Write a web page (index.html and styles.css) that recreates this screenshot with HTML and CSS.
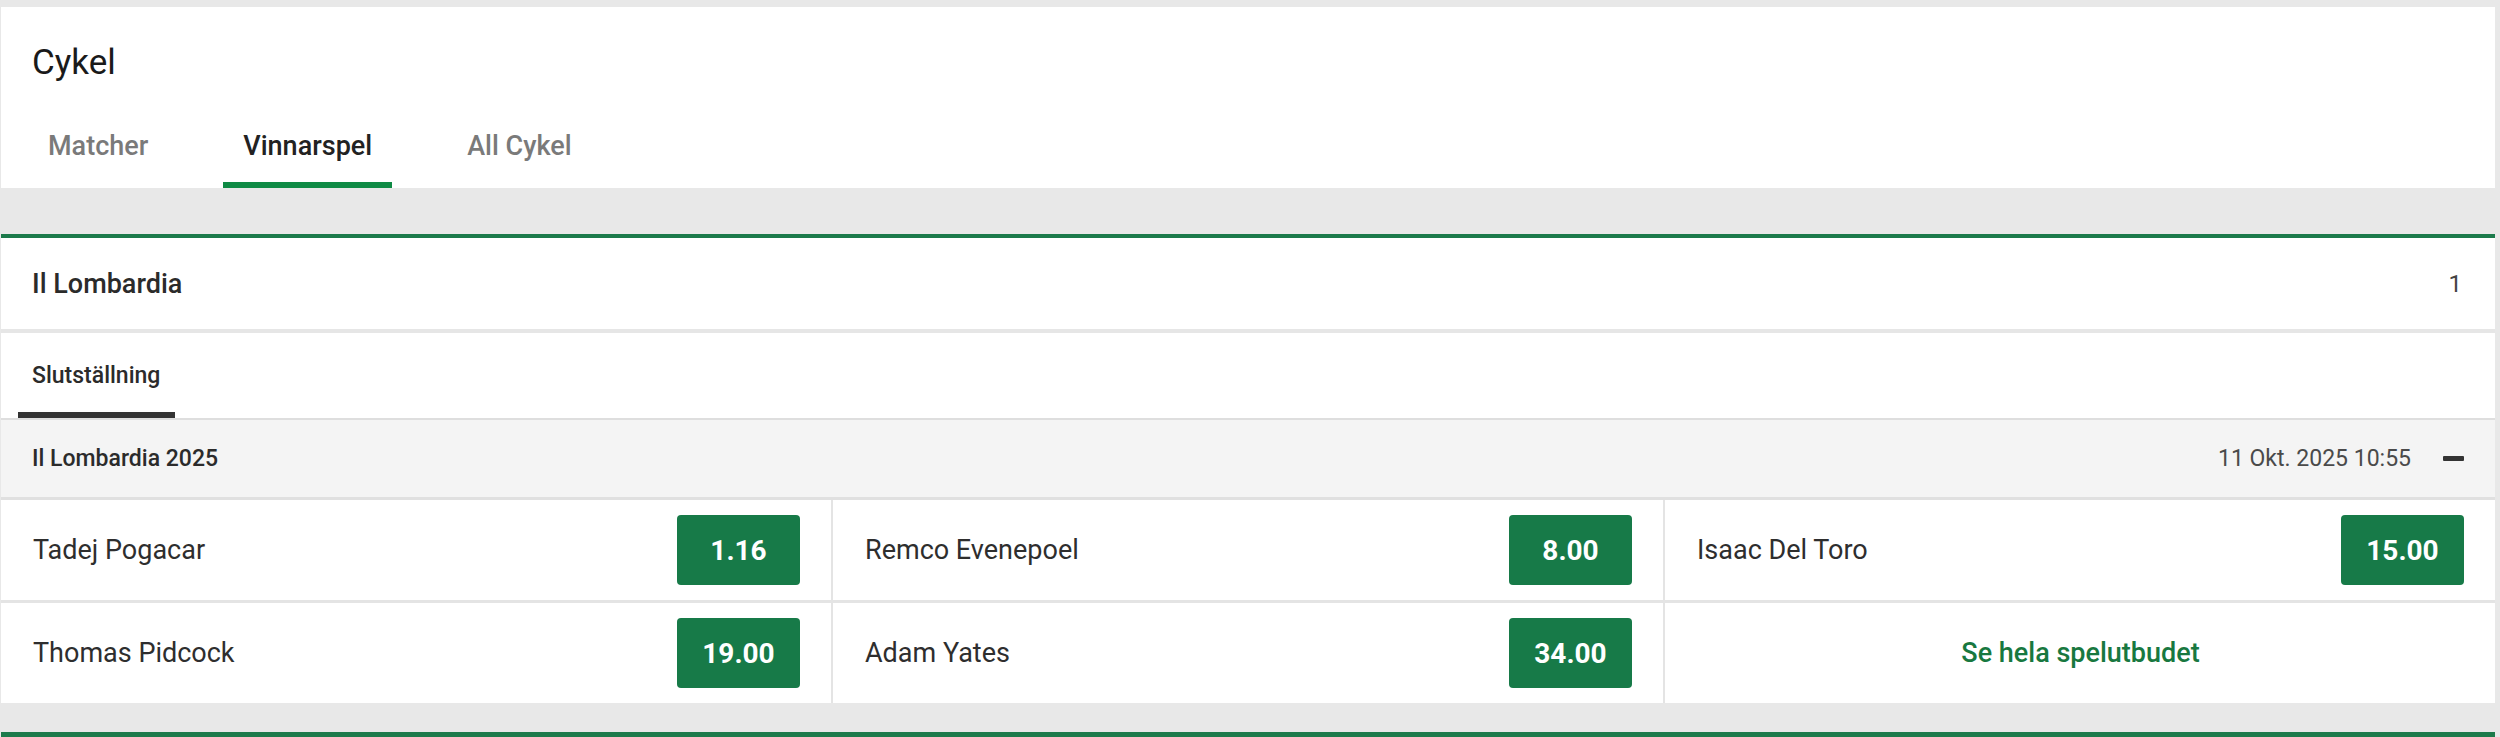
FILE: index.html
```html
<!DOCTYPE html>
<html lang="sv">
<head>
<meta charset="utf-8">
<title>Cykel</title>
<link rel="stylesheet" href="styles.css">
</head>
<body>
<div class="page">
  <div class="top-card">
    <h1 class="title">Cykel</h1>
    <nav class="tabs">
      <a class="tab">Matcher</a>
      <a class="tab active">Vinnarspel</a>
      <a class="tab">All Cykel</a>
    </nav>
  </div>
  <div class="gap-band"></div>
  <section class="event">
    <header class="event-head">
      <span class="event-name">Il Lombardia</span>
      <span class="event-count">1</span>
    </header>
    <div class="subtabs">
      <span class="subtab active">Slutställning</span>
    </div>
    <div class="market-head">
      <span class="market-name">Il Lombardia 2025</span>
      <div class="market-meta">
        <span class="market-date">11 Okt. 2025 10:55</span>
        <span class="collapse" aria-label="Minimera"></span>
      </div>
    </div>
    <div class="grid">
      <div class="cell"><span class="runner">Tadej Pogacar</span><button class="odds">1.16</button></div>
      <div class="cell"><span class="runner">Remco Evenepoel</span><button class="odds">8.00</button></div>
      <div class="cell"><span class="runner">Isaac Del Toro</span><button class="odds">15.00</button></div>
      <div class="cell"><span class="runner">Thomas Pidcock</span><button class="odds">19.00</button></div>
      <div class="cell"><span class="runner">Adam Yates</span><button class="odds">34.00</button></div>
      <div class="cell cell-link"><a class="see-all">Se hela spelutbudet</a></div>
    </div>
  </section>
  <div class="bottom-band"></div>
  <div class="next-section"></div>
</div>
</body>
</html>
```

FILE: styles.css
```css
html, body {
  margin: 0;
  padding: 0;
}
body {
  background: #e8e8e8;
  font-family: Roboto, "Liberation Sans", sans-serif;
  color: #333;
  height: 737px;
  overflow: hidden;
}
.page {
  padding: 7px 5px 0 1px;
}
.top-card {
  background: #fff;
  height: 181px;
  box-sizing: border-box;
  padding-top: 35px;
}
.title {
  margin: 0;
  padding-left: 31px;
  font-size: 35px;
  line-height: 42px;
  font-weight: 400;
  color: #1a1a1a;
}
.tabs {
  display: flex;
  gap: 55px;
  margin-top: 46px;
  padding-left: 27px;
}
.tab {
  display: block;
  padding: 0 20px 20px;
  font-size: 27px;
  line-height: 32px;
  font-weight: 500;
  color: #7a7a7a;
  border-bottom: 6px solid transparent;
}
.tab.active {
  color: #222;
  border-bottom-color: #0f8a44;
}
.gap-band {
  height: 46px;
}
.event {
  background: #fff;
  border-top: 4px solid #1c7a4b;
}
.event-head {
  height: 91px;
  box-sizing: border-box;
  display: flex;
  align-items: center;
  justify-content: space-between;
  padding: 0 33px 0 31px;
  border-bottom: 4px solid #e6e6e6;
  height: 95px;
}
.event-name {
  font-size: 27px;
  font-weight: 500;
  color: #2b2b2b;
}
.event-count {
  font-size: 24px;
  color: #444;
}
.subtabs {
  display: flex;
  padding-left: 17px;
  height: 85px;
}
.subtab {
  display: flex;
  align-items: center;
  box-sizing: border-box;
  height: 85px;
  padding: 6px 15px 0 14px;
  font-size: 23px;
  font-weight: 500;
  color: #2b2b2b;
  border-bottom: 6px solid #333;
}
.market-head {
  display: flex;
  align-items: center;
  justify-content: space-between;
  height: 77px;
  background: #f4f4f4;
  border-top: 2px solid #dedede;
  border-bottom: 3px solid #e0e0e0;
  padding: 0 31px 0 31px;
}
.market-name {
  font-size: 23px;
  font-weight: 500;
  color: #2b2b2b;
}
.market-meta {
  display: flex;
  align-items: center;
  gap: 32px;
}
.market-date {
  font-size: 23px;
  color: #4a4a4a;
}
.collapse {
  display: block;
  width: 21px;
  height: 5px;
  background: #333;
  border-radius: 1px;
}
.grid {
  display: grid;
  grid-template-columns: repeat(3, 1fr);
  gap: 3px 2px;
  background: #e4e4e4;
}
.cell {
  background: #fff;
  height: 100px;
  display: flex;
  align-items: center;
  justify-content: space-between;
  padding: 0 31px 0 32px;
}
.runner {
  font-size: 27px;
  color: #2e2e2e;
}
.odds {
  width: 123px;
  height: 70px;
  border: 0;
  border-radius: 4px;
  background: #177a48;
  color: #fff;
  font-family: Roboto, "Liberation Sans", sans-serif;
  font-size: 28px;
  font-weight: 700;
  padding: 0;
}
.cell-link {
  justify-content: center;
}
.see-all {
  font-size: 27px;
  font-weight: 500;
  color: #187840;
}
.bottom-band {
  height: 29px;
}
.next-section {
  height: 5px;
  background: #1c7a4b;
}
```
